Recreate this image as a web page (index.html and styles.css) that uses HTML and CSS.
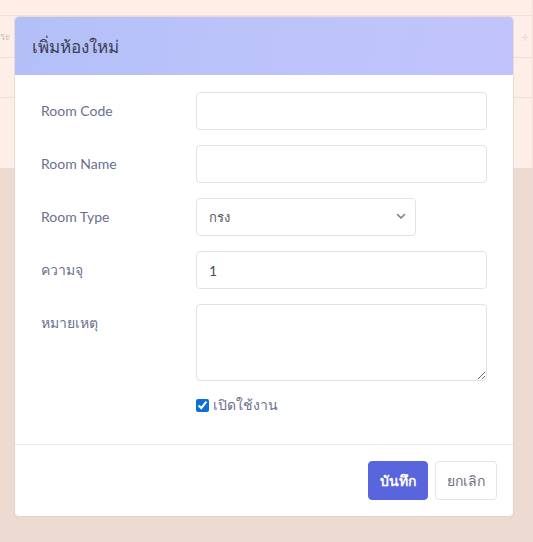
FILE: index.html
```html
<!DOCTYPE html>
<html lang="th">
<head>
<meta charset="utf-8">
<title>เพิ่มห้องใหม่</title>
<link rel="stylesheet" href="styles.css">
</head>
<body>
<div class="page">
  <div class="bg-card">
    <div class="bg-row bg-row-top"></div>
    <div class="bg-row bg-row-head"><span class="bg-text">ระ</span><span class="bg-plus">+</span></div>
    <div class="bg-row bg-row-mid"></div>
  </div>
  <div class="modal">
    <div class="modal-header"><h5 class="modal-title">เพิ่มห้องใหม่</h5></div>
    <div class="modal-body">
      <div class="form-row">
        <label class="form-label">Room Code</label>
        <input class="form-control" type="text">
      </div>
      <div class="form-row">
        <label class="form-label">Room Name</label>
        <input class="form-control" type="text">
      </div>
      <div class="form-row">
        <label class="form-label">Room Type</label>
        <div class="select-wrap">
          <select class="form-select"><option>กรง</option></select>
          <svg class="chevron" width="10" height="7" viewBox="0 0 10 7"><path d="M1.5 1.5 L5 5 L8.5 1.5" fill="none" stroke="#7a7d8c" stroke-width="1.6" stroke-linecap="round" stroke-linejoin="round"/></svg>
        </div>
      </div>
      <div class="form-row">
        <label class="form-label">ความจุ</label>
        <input class="form-control value" type="text" value="1">
      </div>
      <div class="form-row">
        <label class="form-label">หมายเหตุ</label>
        <textarea class="form-control textarea"></textarea>
      </div>
      <div class="form-row check-row">
        <span></span>
        <label class="check"><input type="checkbox" checked class="check-input"><span>เปิดใช้งาน</span></label>
      </div>
    </div>
    <div class="modal-footer">
      <button class="btn btn-primary">บันทึก</button>
      <button class="btn btn-light">ยกเลิก</button>
    </div>
  </div>
</div>
</body>
</html>
```
FILE: styles.css
```css
html, body {
  margin: 0;
  padding: 0;
}
body {
  background: #eddbd2;
  font-family: Lato, "Noto Sans", sans-serif;
  width: 533px;
  height: 542px;
  overflow: hidden;
}
.page {
  position: relative;
  width: 533px;
  height: 542px;
}
.bg-card {
  height: 168px;
  background: #fdeee7;
  border-right: 1px solid #f3e2da;
  box-sizing: border-box;
}
.bg-row {
  border-bottom: 1px solid #f1dfd7;
  box-sizing: border-box;
}
.bg-row-top { height: 16px; }
.bg-row-head {
  height: 42px;
  display: flex;
  align-items: center;
  justify-content: space-between;
  padding: 0 3px 0 0;
  color: #c9bcb8;
  font-size: 10px;
}
.bg-text { margin-left: 0; }
.bg-plus { font-size: 14px; color: #e8d8d2; }
.bg-row-mid { height: 40px; }

.modal {
  position: absolute;
  left: 15px;
  top: 17px;
  width: 498px;
  background: #fff;
  border-radius: 4px;
  overflow: hidden;
  box-shadow: 0 0 0 1px rgba(220, 200, 195, 0.5);
}
.modal-header {
  height: 58px;
  box-sizing: border-box;
  padding: 0 17px;
  display: flex;
  align-items: center;
  background: linear-gradient(100deg, #b3c0f8 0%, #bdc4fb 60%, #c2c3fd 100%);
}
.modal-title {
  margin: 0;
  font-size: 17px;
  font-weight: 500;
  color: #3c3e52;
}
.modal-body {
  padding: 17px 26px 29px 26px;
}
.form-row {
  display: grid;
  grid-template-columns: 155px 1fr;
  margin-bottom: 15px;
  align-items: start;
}
.form-label {
  font-size: 14px;
  color: #6b6f8f;
  line-height: 20px;
  padding-top: 9px;
}
.form-control {
  box-sizing: border-box;
  width: 100%;
  height: 38px;
  border: 1px solid #e1e3e8;
  border-radius: 4px;
  padding: 0 12px;
  font-family: inherit;
  font-size: 14px;
  color: #495057;
  background: #fff;
  outline: none;
}
.textarea {
  height: 77px;
  resize: vertical;
  display: block;
}
.select-wrap {
  position: relative;
  width: 220px;
}
.form-select {
  appearance: none;
  -webkit-appearance: none;
  box-sizing: border-box;
  width: 220px;
  height: 38px;
  border: 1px solid #e1e3e8;
  border-radius: 4px;
  padding: 0 12px;
  font-family: inherit;
  font-size: 13px;
  color: #555a66;
  background: #fff;
  outline: none;
}
.chevron {
  position: absolute;
  right: 10px;
  top: 15px;
}
.check-row {
  margin-bottom: 0;
  margin-top: -1px;
}
.check {
  display: flex;
  align-items: center;
  gap: 4px;
  font-size: 14px;
  color: #6b6f8f;
  line-height: 20px;
}
.check-input {
  margin: 0;
  width: 13px;
  height: 13px;
  accent-color: #0b6fd6;
}
.modal-footer {
  border-top: 1px solid #e9ebef;
  padding: 16px;
  display: flex;
  justify-content: flex-end;
  gap: 7px;
}
.btn {
  height: 39px;
  box-sizing: border-box;
  border-radius: 4px;
  font-family: inherit;
  font-size: 14px;
  padding: 0 8px;
  cursor: pointer;
}
.btn-primary {
  width: 60px;
  background: #5865dc;
  border: 1px solid #5865dc;
  color: #fff;
  font-weight: 700;
}
.btn-light {
  width: 62px;
  background: #fff;
  border: 1px solid #e2e4e8;
  color: #6b6f80;
}
```
